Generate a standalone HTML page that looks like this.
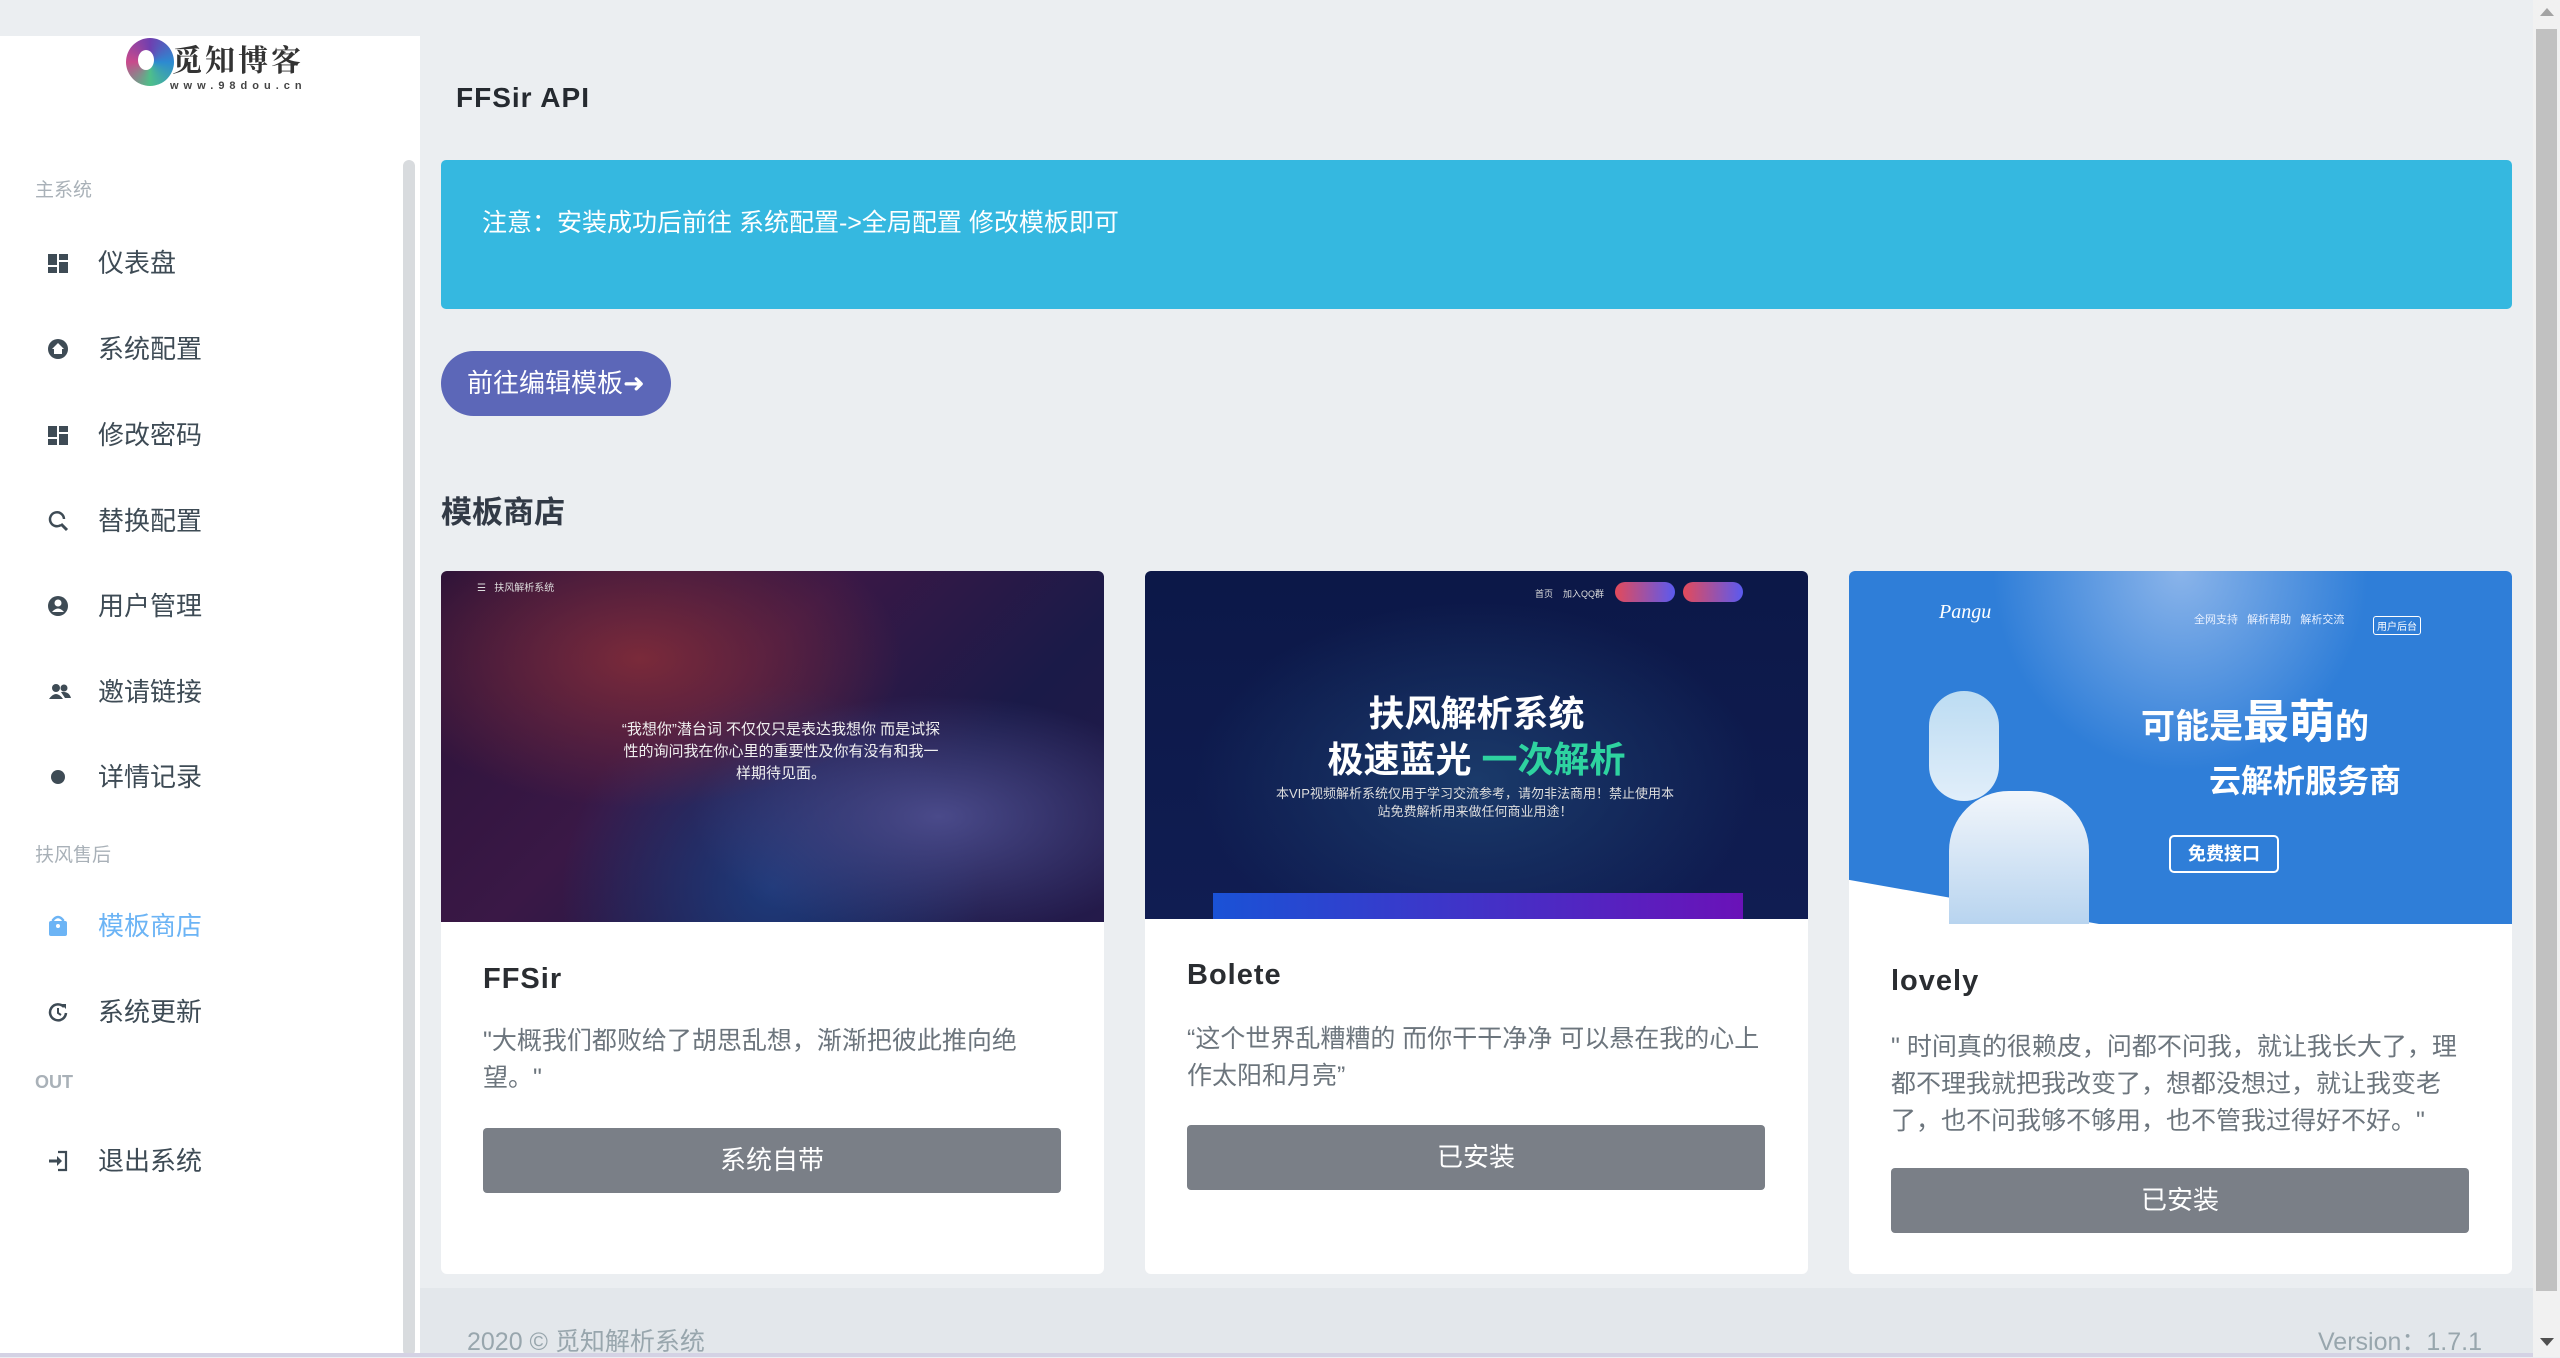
<!DOCTYPE html>
<html><head><meta charset="utf-8">
<style>
*{margin:0;padding:0;box-sizing:border-box}
body{width:2560px;height:1357px;overflow:hidden;background:#ebeef1;font-family:"Liberation Sans","Noto Sans CJK SC",sans-serif;position:relative}
.abs{position:absolute}
#side{left:0;top:36px;width:420px;height:1321px;background:#fff}
.lab{position:absolute;left:35px;font-size:19px;color:#a9b1b8}
.mi{position:absolute;left:0;font-size:26px;color:#3e4b55;height:40px;line-height:40px}
.mi span{position:absolute;left:98px;white-space:nowrap}
.mi svg{position:absolute;left:47px;top:9px}
.card{position:absolute;top:571px;width:663px;height:703px;background:#fff;border-radius:6px;overflow:hidden}
.card h3{position:absolute;left:42px;font-size:29px;font-weight:600;color:#2a2d31;letter-spacing:1px}
.card p{position:absolute;left:42px;right:40px;font-size:25px;line-height:37px;color:#6c757d}
.btn{position:absolute;left:42px;width:578px;height:65px;background:#7a7f87;border-radius:4px;color:#fff;font-size:26px;text-align:center;line-height:65px}
</style></head><body>

<div id="side" class="abs">
  <div class="abs" style="left:126px;top:2px;width:48px;height:48px;border-radius:50%;background:conic-gradient(#6f3fb0,#2c8ad1,#4fbf8a,#c94a8c,#6f3fb0)"></div>
  <div class="abs" style="left:138px;top:14px;width:16px;height:20px;border-radius:50%;background:#fff"></div>
  <div class="abs" style="left:172px;top:0px;font-size:30px;font-weight:bold;color:#333;font-family:'Noto Serif CJK SC',serif;letter-spacing:3px">觅知博客</div>
  <div class="abs" style="left:170px;top:44px;font-size:11px;font-weight:bold;color:#444;letter-spacing:5px">www.98dou.cn</div>
  <div class="abs" style="left:403px;top:124px;width:12px;height:1196px;background:#d8dbde;border-radius:6px"></div>
  <div class="lab" style="top:139px">主系统</div>
  <div class="mi" style="top:207px"><svg width="22" height="22"><rect x="1" y="2" width="9" height="11" fill="#3e4b55"/><rect x="12" y="2" width="9" height="6" fill="#3e4b55"/><rect x="1" y="15" width="9" height="6" fill="#3e4b55"/><rect x="12" y="10" width="9" height="11" fill="#3e4b55"/></svg><span>仪表盘</span></div>
  <div class="mi" style="top:293px"><svg width="22" height="22"><circle cx="11" cy="11" r="10" fill="#3e4b55"/><path d="M5 11 L11 5 L17 11 L15 11 L15 16 L7 16 L7 11Z" fill="#fff"/></svg><span>系统配置</span></div>
  <div class="mi" style="top:379px"><svg width="22" height="22"><rect x="1" y="2" width="9" height="11" fill="#3e4b55"/><rect x="12" y="2" width="9" height="6" fill="#3e4b55"/><rect x="1" y="15" width="9" height="6" fill="#3e4b55"/><rect x="12" y="10" width="9" height="11" fill="#3e4b55"/></svg><span>修改密码</span></div>
  <div class="mi" style="top:465px"><svg width="22" height="22"><path d="M17 9 A7 7 0 1 0 14 15" stroke="#3e4b55" stroke-width="2.5" fill="none"/><path d="M14 14 L20 20" stroke="#3e4b55" stroke-width="3"/></svg><span>替换配置</span></div>
  <div class="mi" style="top:550px"><svg width="22" height="22"><circle cx="11" cy="11" r="10" fill="#3e4b55"/><circle cx="11" cy="8" r="3.5" fill="#fff"/><path d="M5 17 Q11 10 17 17" fill="#fff"/></svg><span>用户管理</span></div>
  <div class="mi" style="top:636px"><svg width="26" height="22"><circle cx="9" cy="7" r="4" fill="#3e4b55"/><path d="M2 18 Q9 8 16 18Z" fill="#3e4b55"/><circle cx="17" cy="7" r="3.5" fill="#3e4b55"/><path d="M14 11 Q22 10 24 17 L18 17Z" fill="#3e4b55"/></svg><span>邀请链接</span></div>
  <div class="mi" style="top:721px"><svg width="22" height="22"><circle cx="11" cy="11" r="7" fill="#3e4b55"/></svg><span>详情记录</span></div>
  <div class="lab" style="top:804px">扶风售后</div>
  <div class="mi" style="top:870px;color:#6cb4f5"><svg width="22" height="22"><rect x="2" y="6" width="18" height="15" rx="2" fill="#6cb4f5"/><path d="M6 8 V5 Q11 -1 16 5 V8" stroke="#6cb4f5" stroke-width="2.5" fill="none"/><circle cx="11" cy="11" r="2" fill="#fff"/></svg><span>模板商店</span></div>
  <div class="mi" style="top:956px"><svg width="22" height="22"><path d="M17 6 A8 8 0 1 0 19 12" stroke="#3e4b55" stroke-width="2.5" fill="none"/><path d="M14 3 L19 3 L19 8Z" fill="#3e4b55"/><path d="M11 7 V12 L14 14" stroke="#3e4b55" stroke-width="2" fill="none"/></svg><span>系统更新</span></div>
  <div class="lab" style="top:1036px;font-weight:bold;font-size:18px">OUT</div>
  <div class="mi" style="top:1105px"><svg width="22" height="22"><path d="M11 2 H19 V20 H11" stroke="#3e4b55" stroke-width="2.2" fill="none"/><path d="M2 11 H12" stroke="#3e4b55" stroke-width="3"/><path d="M10 6 L15 11 L10 16Z" fill="#3e4b55"/></svg><span>退出系统</span></div>
</div>

<div class="abs" style="left:456px;top:82px;font-size:28px;font-weight:600;color:#252a30;letter-spacing:1px">FFSir API</div>
<div class="abs" style="left:441px;top:160px;width:2071px;height:149px;background:#35b8e0;border-radius:5px"></div>
<div class="abs" style="left:482px;top:203px;font-size:25px;color:#fff">注意：安装成功后前往 系统配置-&gt;全局配置 修改模板即可</div>
<div class="abs" style="left:441px;top:351px;width:230px;height:65px;background:#5c67b8;border-radius:33px;color:#fff;font-size:26px;line-height:65px;padding-left:26px">前往编辑模板➜</div>
<div class="abs" style="left:441px;top:487px;font-size:31px;font-weight:bold;color:#323a46">模板商店</div>

<div class="card" style="left:441px">
  <div class="abs" style="left:0;top:0;width:663px;height:351px;background:radial-gradient(ellipse at 30% 25%,#7a2a3a 0%,transparent 40%),radial-gradient(ellipse at 75% 70%,#4a4a8a 0%,transparent 35%),radial-gradient(ellipse at 50% 90%,#1e3a7a 0%,transparent 45%),linear-gradient(135deg,#2a1238,#3a1846 40%,#1a1a48 70%,#241a4a)"></div>
  <div class="abs" style="left:36px;top:8px;color:#ddd;font-size:10px">☰ &nbsp; 扶风解析系统</div>
  <div class="abs" style="left:180px;top:148px;width:320px;color:#f0f0f0;font-size:15px;line-height:22px;text-align:center">“我想你”潜台词 不仅仅只是表达我想你 而是试探性的询问我在你心里的重要性及你有没有和我一样期待见面。</div>
  <h3 style="top:392px">FFSir</h3>
  <p style="top:452px">"大概我们都败给了胡思乱想，渐渐把彼此推向绝望。"</p>
  <div class="btn" style="top:557px">系统自带</div>
</div>

<div class="card" style="left:1145px">
  <div class="abs" style="left:0;top:0;width:663px;height:348px;background:radial-gradient(ellipse at 50% 60%,#1a3a6a,transparent 60%),linear-gradient(#0c1848,#101d52)"></div>
  <div class="abs" style="left:390px;top:16px;color:#ddd;font-size:9px">首页 &nbsp;&nbsp; 加入QQ群</div>
  <div class="abs" style="left:470px;top:11px;width:60px;height:20px;border-radius:10px;background:linear-gradient(90deg,#e34a5a,#5a5af0)"></div>
  <div class="abs" style="left:538px;top:11px;width:60px;height:20px;border-radius:10px;background:linear-gradient(90deg,#e34a5a,#5a5af0)"></div>
  <div class="abs" style="left:0;top:120px;width:663px;text-align:center;color:#fff;font-size:36px;font-weight:bold;line-height:46px">扶风解析系统<br>极速蓝光 <span style="color:#2ed3a0">一次解析</span></div>
  <div class="abs" style="left:130px;top:214px;width:400px;text-align:center;color:#ddd;font-size:13px;line-height:18px">本VIP视频解析系统仅用于学习交流参考，请勿非法商用！禁止使用本站免费解析用来做任何商业用途！</div>
  <div class="abs" style="left:68px;top:322px;width:530px;height:26px;background:linear-gradient(90deg,#1a52d6,#6a12b8)"></div>
  <h3 style="top:388px">Bolete</h3>
  <p style="top:450px">“这个世界乱糟糟的 而你干干净净 可以悬在我的心上作太阳和月亮”</p>
  <div class="btn" style="top:554px">已安装</div>
</div>

<div class="card" style="left:1849px">
  <div class="abs" style="left:0;top:0;width:663px;height:353px;background:radial-gradient(ellipse at 50% 0%,#8ab4ea,transparent 40%),#2f7ed8"></div>
  <div class="abs" style="left:0;top:290px;width:250px;height:63px;background:#fff;clip-path:polygon(0 30%,100% 100%,0 100%)"></div>
  <div class="abs" style="left:90px;top:30px;color:#fff;font-size:20px;font-style:italic;font-family:'Liberation Serif',serif">Pangu</div>
  <div class="abs" style="left:345px;top:40px;color:#e8f0ff;font-size:11px">全网支持 &nbsp; 解析帮助 &nbsp; 解析交流</div>
  <div class="abs" style="left:524px;top:45px;border:1px solid #fff;border-radius:3px;color:#fff;font-size:10px;padding:1px 3px">用户后台</div>
  <div class="abs" style="left:80px;top:120px;width:70px;height:110px;border-radius:35px;background:linear-gradient(#bcdcf2,#e1eefa)"></div>
  <div class="abs" style="left:100px;top:220px;width:140px;height:133px;border-radius:60px 60px 0 0;background:linear-gradient(#f2f6fb,#b8d4ef)"></div>
  <div class="abs" style="left:292px;top:115px;color:#fff;font-size:34px;font-weight:bold">可能是<span style="font-size:46px">最萌</span>的</div>
  <div class="abs" style="left:360px;top:185px;color:#fff;font-size:32px;font-weight:bold">云解析服务商</div>
  <div class="abs" style="left:320px;top:264px;width:110px;height:38px;border:2px solid #fff;border-radius:5px;color:#fff;font-size:18px;font-weight:bold;text-align:center;line-height:34px">免费接口</div>
  <h3 style="top:394px">lovely</h3>
  <p style="top:458px">" 时间真的很赖皮，问都不问我，就让我长大了，理都不理我就把我改变了，想都没想过，就让我变老了，也不问我够不够用，也不管我过得好不好。"</p>
  <div class="btn" style="top:597px">已安装</div>
</div>

<div class="abs" style="left:420px;top:1288px;width:2113px;height:69px;background:#e3e7eb"></div>
<div class="abs" style="left:467px;top:1322px;font-size:25px;color:#98a6ad">2020 © 觅知解析系统</div>
<div class="abs" style="left:2318px;top:1322px;font-size:25px;color:#98a6ad">Version：1.7.1</div>
<div class="abs" style="left:2533px;top:0;width:27px;height:1357px;background:#f1f1f1"></div>
<div class="abs" style="left:2536px;top:29px;width:21px;height:1262px;background:#c1c1c1"></div>
<div class="abs" style="left:2540px;top:8px;width:0;height:0;border-left:7px solid transparent;border-right:7px solid transparent;border-bottom:8px solid #a3a3a3"></div>
<div class="abs" style="left:2540px;top:1338px;width:0;height:0;border-left:7px solid transparent;border-right:7px solid transparent;border-top:8px solid #505050"></div>
<div class="abs" style="left:0;top:1353px;width:2533px;height:4px;background:#d4d2e4"></div>
</body></html>
